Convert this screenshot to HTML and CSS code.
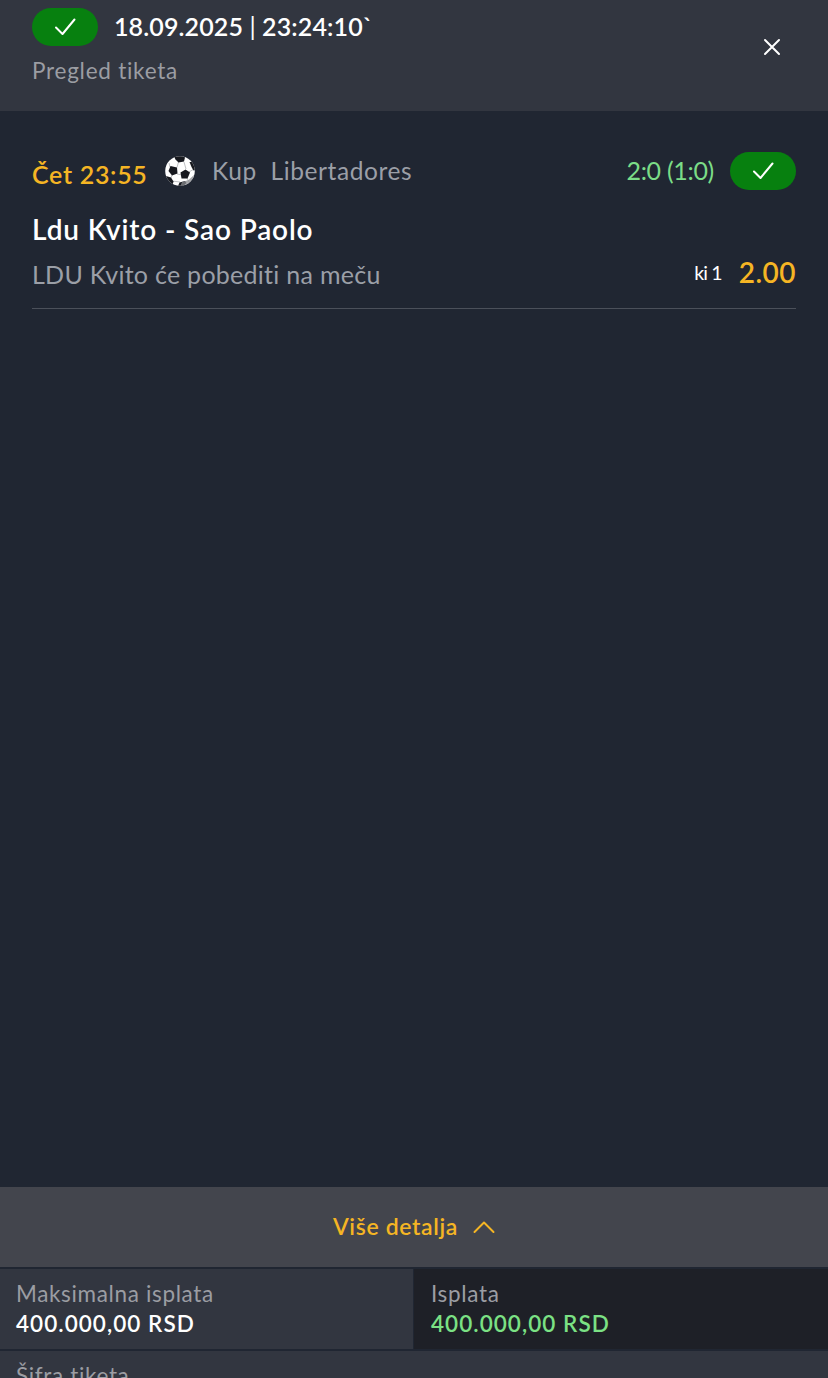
FILE: index.html
```html
<!DOCTYPE html>
<html lang="sr">
<head>
<meta charset="utf-8">
<title>Pregled tiketa</title>
<link rel="stylesheet" href="styles.css">
</head>
<body>
<div class="ticket">
  <header class="header">
    <div class="header-info">
      <div class="header-row">
        <span class="badge"><svg width="22" height="18" viewBox="0 0 22 18"><path class="stroke" d="M2 9.5 8.5 16 20.5 1.5"/></svg></span>
        <span class="date">18.09.2025 <span class="bar">|</span> 23:24:10`</span>
      </div>
      <div class="subtitle"><span>Pregled tiketa</span></div>
    </div>
    <svg class="close" width="18" height="18" viewBox="0 0 18 18"><path class="stroke" d="M2 2l14 14M16 2l-14 14"/></svg>
  </header>
  <main class="content">
    <article class="match">
      <div class="match-top">
        <span class="time">Čet 23:55</span>
        <svg class="ball" width="30" height="30" viewBox="0 0 30 30">
          <defs><clipPath id="ball"><circle cx="15" cy="15" r="14.8"/></clipPath></defs>
          <circle cx="15" cy="15" r="14.8" fill="#fff"/>
          <g clip-path="url(#ball)">
            <path class="seam" d="M12 11.500 13.500 6M12 18l5 1M19 6l2 7M24 16l5-3M22 22l2 4M7 19l-1 3M5 11 4 7M7 25l8 1"/>
            <path class="patch" d="M5.500 10 12 11.500 12.500 17.500 7 19.500 3.500 15z"/>
            <path class="patch" d="M20.500 13.500 25 16.500 22.500 22.500 16.500 22.500 15.500 16.500z"/>
            <path class="patch" d="M9 .500 16-1 20 1.500 19 5.500 13.500 6.500 10.500 3.500z"/>
            <path class="patch" d="M24.500 6 29 6 31 14 28.500 14.500 26.500 11z"/>
            <path class="patch" d="M1 20 6 21.500 8.500 25.500 7.500 29 2 27z"/>
            <path class="patch" d="M14.500 26.500 20 25 21.500 27 17 31 13 30z"/>
            <path class="shade" d="M17 26 23.500 24 29 19 28 26 20 31H15z"/>
          </g>
        </svg>
        <span class="league">Kup&nbsp; Libertadores</span>
        <span class="score">2:0 (1:0)</span>
        <span class="badge"><svg width="22" height="18" viewBox="0 0 22 18"><path class="stroke" d="M2 9.5 8.5 16 20.5 1.5"/></svg></span>
      </div>
      <div class="teams"><span>Ldu Kvito - Sao Paolo</span></div>
      <div class="bet">
        <span class="tip">LDU Kvito će pobediti na meču</span>
        <span class="pick">ki 1</span>
        <span class="odds">2.00</span>
      </div>
    </article>
  </main>
  <footer class="footer">
    <div class="more"><span>Više detalja</span><svg width="22" height="14" viewBox="0 0 22 14"><path class="stroke" d="M1.5 12 11 2.500l9.500 9.500"/></svg></div>
    <div class="summary">
      <div class="cell"><div class="label"><span>Maksimalna isplata</span></div><div class="value"><span>400.000,00 RSD</span></div></div>
      <div class="cell payout"><div class="label"><span>Isplata</span></div><div class="value"><span>400.000,00 RSD</span></div></div>
      <div class="cell code"><div class="label"><span>Šifra tiketa</span></div></div>
    </div>
  </footer>
</div>
</body>
</html>
```
FILE: styles.css
```css
* { box-sizing: border-box; }
body { margin: 0; background: #202632; font-family: Lato, "Liberation Sans", sans-serif; color: #fff; }
.ticket { display: flex; flex-direction: column; height: 1378px; overflow: hidden; white-space: nowrap; }
svg { display: block; flex: none; }
.stroke { fill: none; stroke: currentColor; stroke-width: 2; stroke-linecap: round; stroke-linejoin: round; }
.header { display: flex; justify-content: space-between; height: 111px; padding: 8px 47px 0 32px; background: #323640; }
.header-row { display: flex; gap: 16px; height: 38px; }
.badge { display: flex; flex: none; align-items: center; justify-content: center; width: 66px; height: 38px; border-radius: 19px; background: #07800f; }
.date { font-size: 25px; font-weight: 600; line-height: 37px; letter-spacing: .12px; }
.bar { font-weight: 400; }
.subtitle { margin-top: 10px; font-size: 22.5px; line-height: 29px; letter-spacing: .75px; color: #9b9da3; }
.close { margin-top: 30px; }
.content { flex: 1; padding: 41px 32px 0; }
.match { height: 157px; border-bottom: 1px solid #4b505a; }
.match-top { display: flex; height: 38px; }
.time { width: 132px; font-size: 25px; font-weight: 600; line-height: 44px; letter-spacing: .7px; color: #f5b524; }
.ball { margin: 4px 17px 0 1px; }
.seam { fill: none; stroke: #a4a6aa; stroke-width: .7; }
.patch { fill: #17191f; }
.shade { fill: #888a8e; opacity: .75; }
.league { font-size: 24.5px; line-height: 37px; letter-spacing: .6px; color: #9b9fa7; }
.score { margin: 0 16px 0 auto; font-size: 25px; line-height: 37px; letter-spacing: -.3px; color: #7bdc87; }
.teams { margin-top: 22px; font-size: 28px; font-weight: 600; line-height: 34px; letter-spacing: .86px; }
.bet { display: flex; margin-top: 11px; font-size: 25px; line-height: 34px; letter-spacing: .27px; color: #9b9fa7; }
.pick { margin-left: auto; font-size: 19.5px; line-height: 31px; letter-spacing: -.9px; color: #fff; }
.odds { margin-left: 17px; font-size: 28px; font-weight: 600; line-height: 30px; letter-spacing: .5px; color: #f5b524; }
.footer { height: 191px; }
.more { display: flex; align-items: center; justify-content: center; gap: 15px; height: 80px; background: #43454d; color: #f5b524; font-size: 23px; font-weight: 600; line-height: 28px; letter-spacing: .65px; }
.more span { margin-top: -2px; }
.summary { display: grid; grid-template-columns: 413px 1fr; grid-template-rows: 80px 80px; gap: 2px 1px; padding-top: 2px; }
.cell { padding: 10px 16px 0; background: #323640; }
.label { font-size: 22.5px; line-height: 29px; letter-spacing: .65px; color: #9b9da3; }
.value { margin-top: 1px; font-size: 22.5px; font-weight: 600; line-height: 29px; letter-spacing: 1.05px; }
.payout { padding-left: 17px; background: #1e2027; }
.payout .value { color: #7be184; }
.code { grid-column: span 2; }
```
